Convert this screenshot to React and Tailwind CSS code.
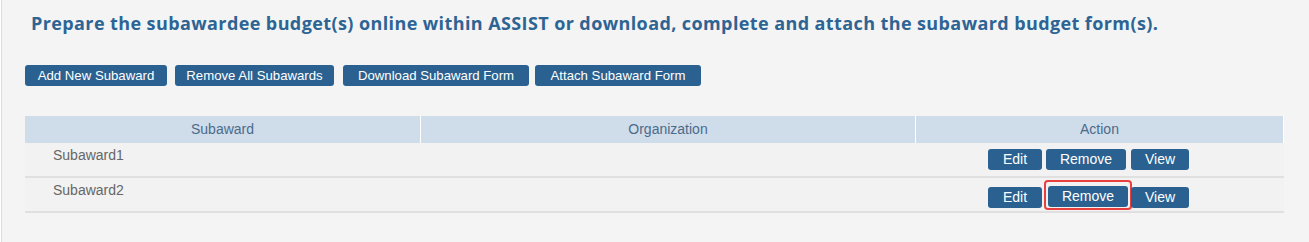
import React from "react";

const btnBase =
  "h-[21px] rounded-[3px] bg-[#2a6190] text-white leading-[21px] whitespace-nowrap";
const topBtn = `${btnBase} px-0 text-[13.2px]`;
const actBtn = `${btnBase} px-0 text-[14px]`;

function ActionButtons({ highlight }) {
  if (!highlight) {
    return (
      <div className="flex items-start gap-1 pl-[72px] pt-[6px]">
        <button className={`${actBtn} w-[54px]`}>Edit</button>
        <button className={`${actBtn} w-[80px]`}>Remove</button>
        <button className={`${actBtn} w-[58px] ml-[1px]`}>View</button>
      </div>
    );
  }
  return (
    <div className="flex items-start pl-[72px] pt-[2px]">
      <button className={`${actBtn} w-[54px] mt-[7px]`}>Edit</button>
      <span className="ml-[2px] w-[88px] h-[30px] rounded-[4px] border-2 border-[#e8403f] flex justify-center pt-[4px]">
        <button className={`${actBtn} w-[80px] block`}>Remove</button>
      </span>
      <button className={`${actBtn} w-[58px] mt-[7px] ml-[-1px]`}>View</button>
    </div>
  );
}

export default function App() {
  const font = { fontFamily: '"Liberation Sans", Arial, sans-serif' };
  return (
    <div
      className="w-[1309px] h-[242px] bg-[#f4f4f4] border-l border-[#dcdcdc] ml-px pl-[23px] pr-[25px] pt-[10px]"
      style={font}
    >
      <h1
        className="pl-[6px] text-[18px] font-bold text-[#2d6494] leading-[26px] tracking-[0.4px]"
        style={{ fontFamily: '"Open Sans", "Liberation Sans", sans-serif' }}
      >
        Prepare the subawardee budget(s) online within ASSIST or download, complete and attach the subaward budget form(s).
      </h1>
      <div className="flex mt-[29px]">
        <button className={`${topBtn} w-[142px]`}>Add New Subaward</button>
        <button className={`${topBtn} w-[159px] ml-[8px]`}>Remove All Subawards</button>
        <button className={`${topBtn} w-[186px] ml-[9px]`}>Download Subaward Form</button>
        <button className={`${topBtn} w-[166px] ml-[6px]`}>Attach Subaward Form</button>
      </div>
      <div className="mt-[30px] w-[1259px]">
        <div className="grid grid-cols-[396px_495px_368px] h-[27px] bg-[#cfdcea] text-[#4b6b8a] text-[14px]">
          <div className="flex items-center justify-center border-r border-white">Subaward</div>
          <div className="flex items-center justify-center border-r border-white">Organization</div>
          <div className="flex items-center justify-center border-r border-white">Action</div>
        </div>
        {["Subaward1", "Subaward2"].map((name, i) => (
          <div
            key={name}
            className="grid grid-cols-[396px_495px_368px] h-[35px] bg-[#f2f2f2] border-b-2 border-[#e0e0e0] text-[14px] text-[#666]"
          >
            <div className="pl-[28px] pt-[2px]">{name}</div>
            <div></div>
            <div>
              <ActionButtons highlight={i === 1} />
            </div>
          </div>
        ))}
      </div>
    </div>
  );
}
